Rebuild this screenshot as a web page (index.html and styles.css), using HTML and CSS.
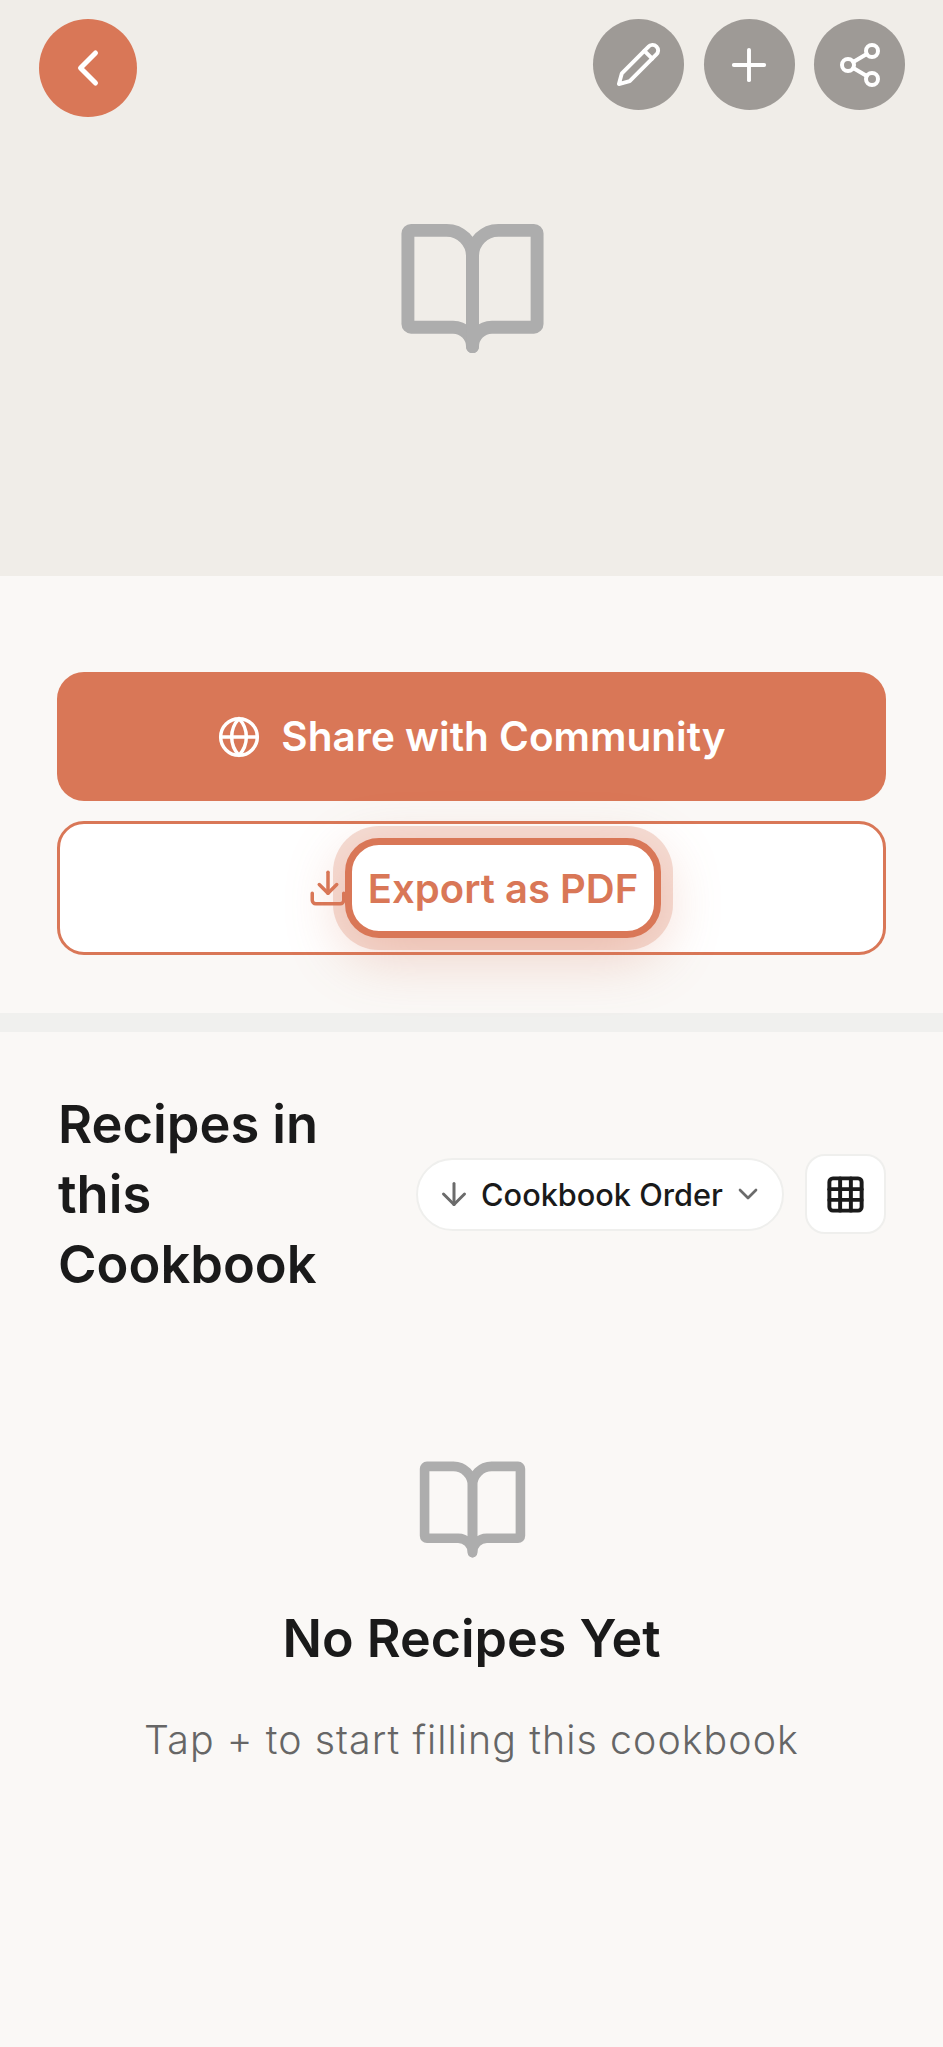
FILE: index.html
```html
<!DOCTYPE html>
<html lang="en">
<head>
<meta charset="utf-8">
<title>Cookbook</title>
<link rel="stylesheet" href="styles.css">
</head>
<body>
<header class="hero">
  <button class="round back" aria-label="Back">
    <svg class="ic ic-back" viewBox="0 0 24 24"><path d="m15 18-6-6 6-6"/></svg>
  </button>
  <div class="actions">
    <button class="round" aria-label="Edit">
      <svg class="ic ic-pen" viewBox="0 0 24 24"><path d="M17 3a2.85 2.83 0 1 1 4 4L7.5 20.5 2 22l1.5-5.5Z"/><path d="m15 5 4 4"/></svg>
    </button>
    <button class="round" aria-label="Add">
      <svg class="ic ic-act" viewBox="0 0 24 24"><path d="M5 12h14"/><path d="M12 5v14"/></svg>
    </button>
    <button class="round" aria-label="Share">
      <svg class="ic ic-share" viewBox="0 0 24 24"><circle cx="18" cy="5" r="3"/><circle cx="6" cy="12" r="3"/><circle cx="18" cy="19" r="3"/><path d="m8.6 13.5 6.8 4"/><path d="m15.4 6.5-6.8 4"/></svg>
    </button>
  </div>
  <svg class="ic book book-lg" viewBox="0 0 24 24"><path d="M2.5 3H8a4 4 0 0 1 4 4v14a3 3 0 0 0-3-3H2.5a.5.5 0 0 1-.5-.5v-14a.5.5 0 0 1 .5-.5z"/><path d="M21.5 3H16a4 4 0 0 0-4 4v14a3 3 0 0 1 3-3h6.5a.5.5 0 0 0 .5-.5v-14a.5.5 0 0 0-.5-.5z"/></svg>
</header>

<section class="cta">
  <button class="btn btn-primary">
    <svg class="ic ic-globe" viewBox="0 0 24 24"><circle cx="12" cy="12" r="10"/><path d="M12 2a14.5 14.5 0 0 0 0 20 14.5 14.5 0 0 0 0-20"/><path d="M2 12h20"/></svg>
    <span>Share with Community</span>
  </button>
  <button class="btn btn-outline">
    <svg class="ic ic-dl" viewBox="0 0 24 24"><path d="M21 15v4a2 2 0 0 1-2 2H5a2 2 0 0 1-2-2v-4"/><path d="m7 10 5 5 5-5"/><path d="M12 15V3"/></svg>
    <span class="focus-label">Export as PDF</span>
  </button>
</section>

<div class="divider"></div>

<section class="recipes">
  <div class="recipes-head">
    <h2 class="recipes-title">Recipes in this Cookbook</h2>
    <button class="sort">
      <svg class="ic ic-down" viewBox="0 0 24 24"><path d="M12 5v14"/><path d="m19 12-7 7-7-7"/></svg>
      <span>Cookbook Order</span>
      <svg class="ic ic-chev" viewBox="0 0 24 24"><path d="m6 9 6 6 6-6"/></svg>
    </button>
    <button class="grid-btn" aria-label="Grid view">
      <svg class="ic ic-grid" viewBox="0 0 24 24"><rect x="3" y="3" width="18" height="18" rx="2"/><path d="M3 9h18"/><path d="M3 15h18"/><path d="M9 3v18"/><path d="M15 3v18"/></svg>
    </button>
  </div>
  <div class="empty">
    <svg class="ic book book-sm" viewBox="0 0 24 24"><path d="M2.5 3H8a4 4 0 0 1 4 4v14a3 3 0 0 0-3-3H2.5a.5.5 0 0 1-.5-.5v-14a.5.5 0 0 1 .5-.5z"/><path d="M21.5 3H16a4 4 0 0 0-4 4v14a3 3 0 0 1 3-3h6.5a.5.5 0 0 0 .5-.5v-14a.5.5 0 0 0-.5-.5z"/></svg>
    <h3 class="empty-title">No Recipes Yet</h3>
    <p class="empty-text">Tap + to start filling this cookbook</p>
  </div>
</section>
</body>
</html>
```
FILE: styles.css
```css
* { box-sizing: border-box; }
html, body { margin: 0; padding: 0; }
body {
  min-height: 2047px;
  background: #faf8f6;
  color: #1a1a1a;
  font-family: "Inter", "Liberation Sans", sans-serif;
}
button { font: inherit; padding: 0; cursor: pointer; }
.ic { fill: none; stroke: currentColor; stroke-width: 2; stroke-linecap: round; stroke-linejoin: round; flex: none; display: block; }

.hero {
  position: relative;
  height: 576px;
  padding-left: 2px;
  background: #f0ede8;
  display: flex;
  align-items: center;
  justify-content: center;
}
.round {
  width: 91px;
  height: 91px;
  border: 0;
  border-radius: 50%;
  background: #9e9a96;
  color: #fff;
  display: flex;
  align-items: center;
  justify-content: center;
}
.back {
  position: absolute;
  left: 38.5px;
  top: 19px;
  width: 98px;
  height: 98px;
  background: #d97757;
}
.actions {
  position: absolute;
  right: 38px;
  top: 19px;
  display: flex;
  gap: 19.5px;
}
.ic-back { width: 60px; height: 60px; }
.ic-pen { width: 47px; height: 47px; stroke-width: 2; }
.ic-act { width: 52px; height: 52px; stroke-width: 1.8; }
.ic-share { width: 48px; height: 48px; stroke-width: 2; }
.book { color: #adadad; }
.book-lg { width: 155px; height: 155px; }
.book-sm { width: 115px; height: 115px; margin-left: 2px; }

.cta {
  padding: 96px 57px 58px;
  display: flex;
  flex-direction: column;
  gap: 20px;
}
.btn {
  width: 100%;
  border-radius: 27px;
  display: flex;
  align-items: center;
  justify-content: center;
  font-size: 40.5px;
  font-weight: 600;
}
.btn-primary {
  height: 129px;
  border: 0;
  background: #d97757;
  color: #fff;
  gap: 20px;
}
.ic-globe { width: 44px; height: 44px; stroke-width: 1.9; }
.btn-outline {
  height: 134px;
  border: 3px solid #d97757;
  background: #fff;
  color: #d97757;
  padding-left: 25px;
}
.ic-dl { width: 42px; height: 42px; margin-right: -4px; }
.focus-label {
  height: 100px;
  width: 316px;
  border: 7px solid #d97757;
  border-radius: 34px;
  background: #fff;
  font-size: 40px;
  display: flex;
  align-items: center;
  justify-content: center;
  box-shadow: 0 0 0 12px rgba(217, 119, 87, 0.25), 0 16px 60px rgba(217, 119, 87, 0.33);
}
.divider { height: 19px; background: #f0f0ee; }

.recipes { padding: 57px 57px 0; }
.recipes-head {
  display: flex;
  align-items: center;
}
.recipes-title {
  margin: 0 auto 0 1px;
  width: 300px;
  font-size: 52.4px;
  line-height: 70px;
  font-weight: 600;
}
.sort {
  width: 368px;
  height: 73px;
  border: 2px solid #efefed;
  border-radius: 37px;
  background: #fff;
  color: #1a1a1a;
  display: flex;
  align-items: center;
  justify-content: center;
  font-size: 30.7px;
  font-weight: 500;
}
.ic-down { width: 36px; height: 36px; color: #6b6b6b; margin-right: 9px; }
.ic-chev { width: 32px; height: 32px; color: #6b6b6b; margin-left: 9px; }
.grid-btn {
  width: 81px;
  height: 80px;
  margin-left: 21px;
  border: 2px solid #efefed;
  border-radius: 20px;
  background: #fff;
  color: #1a1a1a;
  display: flex;
  align-items: center;
  justify-content: center;
}
.ic-grid { width: 43px; height: 43px; stroke-width: 2.2; }

.empty {
  display: flex;
  flex-direction: column;
  align-items: center;
  padding-top: 153px;
}
.empty-title {
  margin: 40px 0 0;
  font-size: 52px;
  line-height: 64px;
  font-weight: 600;
}
.empty-text {
  margin: 44px 0 0;
  font-size: 39.3px;
  line-height: 50px;
  font-weight: 300;
  letter-spacing: 1.08px;
  color: #666;
}
```
